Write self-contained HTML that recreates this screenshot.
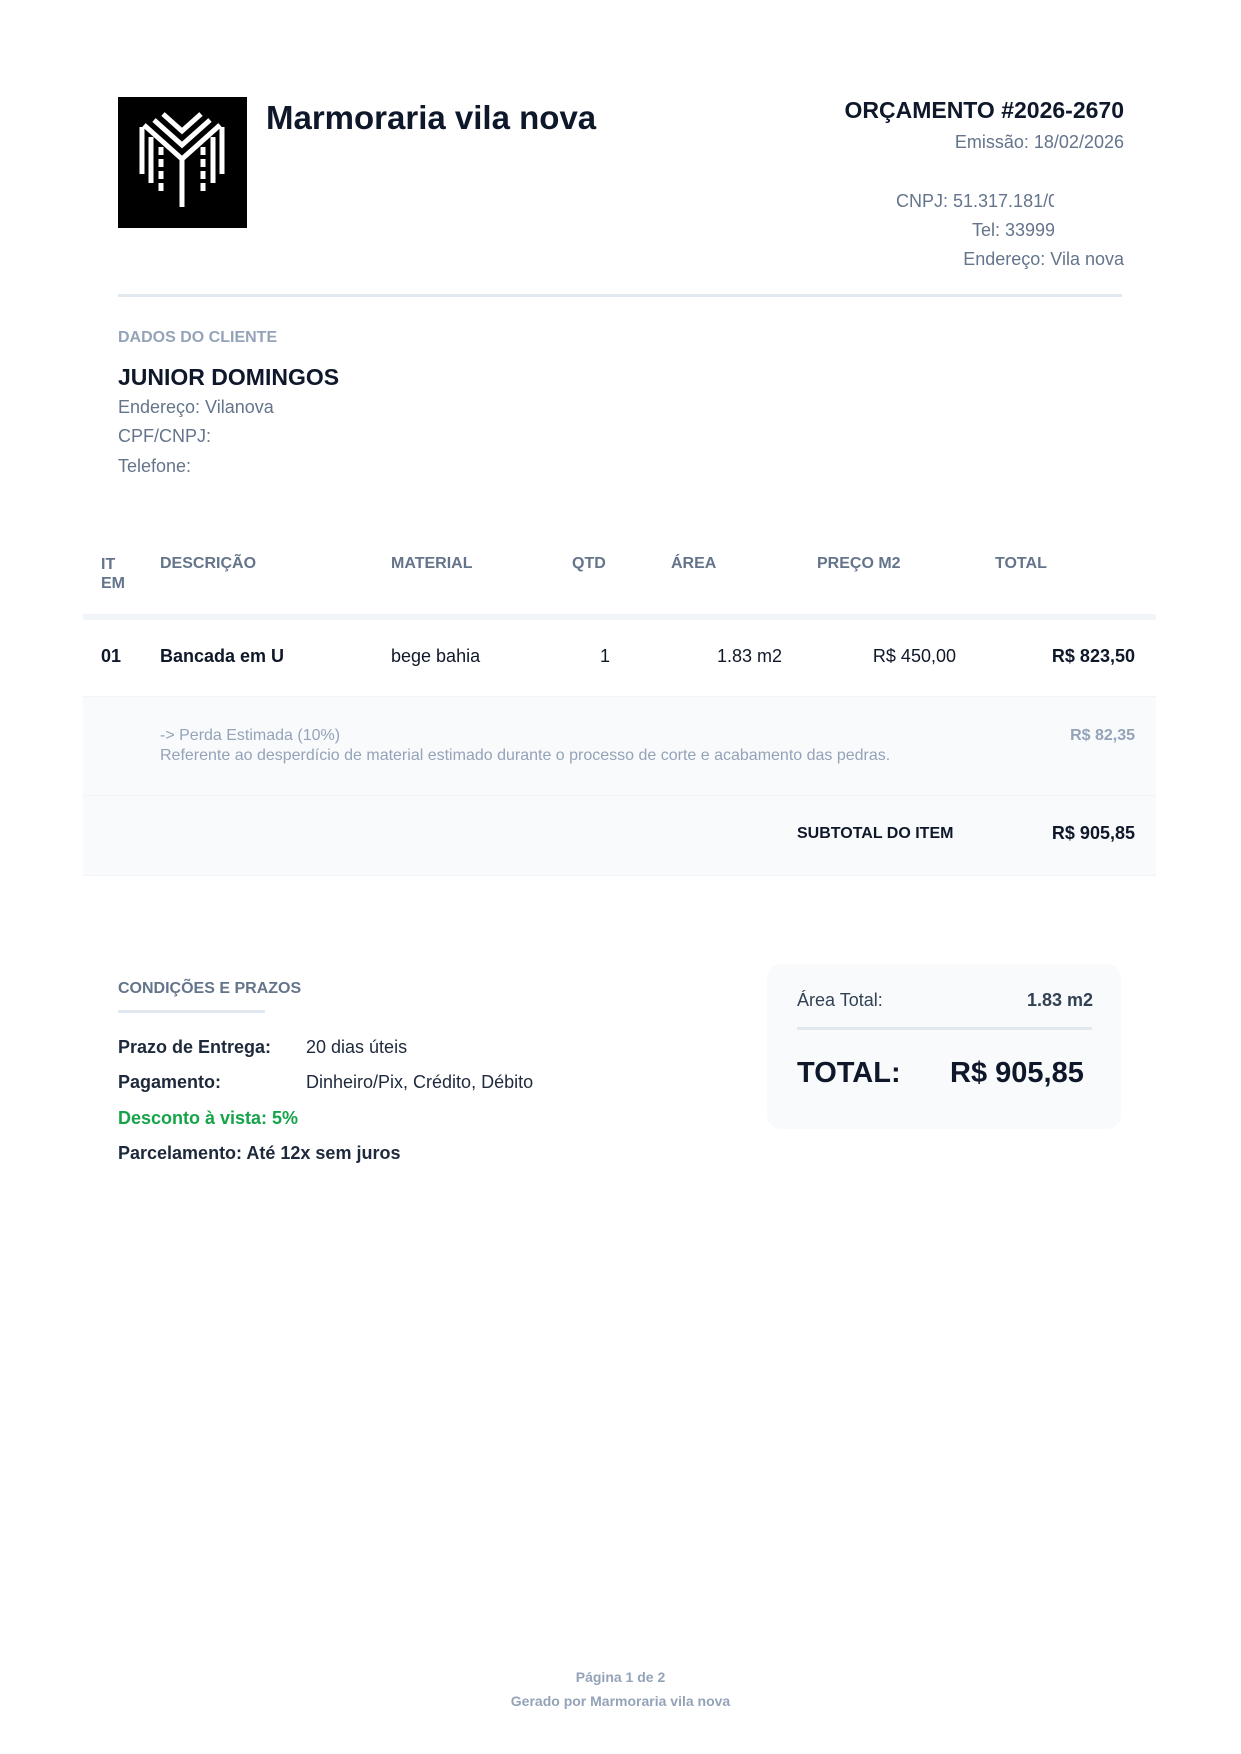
<!DOCTYPE html>
<html><head><meta charset="utf-8"><style>
*{margin:0;padding:0;box-sizing:border-box}
body{width:1241px;height:1754px;background:#fff;font-family:"Liberation Sans",Arial,sans-serif;color:#1e293b;position:relative;overflow:hidden}
.a{position:absolute;white-space:nowrap}
.g{color:#64748b}
.b{font-weight:bold}
.r{text-align:right}
</style></head><body>
<div class="a" style="left:118px;top:97px;width:129px;height:131px;background:#000">
<svg width="129" height="131" viewBox="0 0 129 131">
<g stroke="#fff" stroke-width="5" fill="none" stroke-linecap="butt">
<polyline points="45,17 64,34 83,17"/>
<polyline points="36,23 64,48 92,23"/>
<polyline points="26,28 64,62 102,28"/>
<line x1="64" y1="62" x2="64" y2="110"/>
<line x1="24" y1="30" x2="24" y2="77"/>
<line x1="104" y1="30" x2="104" y2="77"/>
<line x1="33" y1="40" x2="33" y2="86"/>
<line x1="95" y1="40" x2="95" y2="86"/>
<line x1="43" y1="50" x2="43" y2="95" stroke-dasharray="8 4"/>
<line x1="85" y1="50" x2="85" y2="95" stroke-dasharray="8 4"/>
</g></svg></div>
<div class="a b" style="left:266px;top:99px;font-size:33px;color:#0f172a">Marmoraria vila nova</div>
<div class="a b r" style="right:117px;top:97px;font-size:23px;color:#0f172a">ORÇAMENTO #2026-2670</div>
<div class="a g r" style="right:117px;top:132px;font-size:18px">Emissão: 18/02/2026</div>
<div class="a g" style="left:896px;top:191px;width:158px;overflow:hidden;font-size:18px">CNPJ: 51.317.181/0001</div>
<div class="a g" style="left:972px;top:220px;width:82px;overflow:hidden;font-size:18px">Tel: 33999999</div>
<div class="a g r" style="right:117px;top:249px;font-size:18px">Endereço: Vila nova</div>
<div class="a" style="left:118px;top:294px;width:1004px;height:3px;background:#e2e8f0"></div>
<div class="a b" style="left:118px;top:329px;font-size:16px;color:#94a3b8">DADOS DO CLIENTE</div>
<div class="a b" style="left:118px;top:364px;font-size:23px;color:#0f172a">JUNIOR DOMINGOS</div>
<div class="a g" style="left:118px;top:397px;font-size:18px">Endereço: Vilanova</div>
<div class="a g" style="left:118px;top:426px;font-size:18px">CPF/CNPJ:</div>
<div class="a g" style="left:118px;top:456px;font-size:18px">Telefone:</div>

<div class="a b g" style="left:101px;top:555px;font-size:16px;line-height:19px">IT<br>EM</div>
<div class="a b g" style="left:160px;top:555px;font-size:16px">DESCRIÇÃO</div>
<div class="a b g" style="left:391px;top:555px;font-size:16px">MATERIAL</div>
<div class="a b g" style="left:572px;top:555px;font-size:16px">QTD</div>
<div class="a b g" style="left:671px;top:555px;font-size:16px">ÁREA</div>
<div class="a b g" style="left:817px;top:555px;font-size:16px">PREÇO M2</div>
<div class="a b g" style="left:995px;top:555px;font-size:16px">TOTAL</div>
<div class="a" style="left:83px;top:614px;width:1073px;height:6px;background:#f1f5f9"></div>
<div class="a b" style="left:101px;top:646px;font-size:18px;color:#0f172a">01</div>
<div class="a b" style="left:160px;top:646px;font-size:18px;color:#0f172a">Bancada em U</div>
<div class="a" style="left:391px;top:646px;font-size:18px;color:#0f172a">bege bahia</div>
<div class="a" style="left:600px;top:646px;font-size:18px;color:#0f172a">1</div>
<div class="a r" style="right:459px;top:646px;font-size:18px;color:#0f172a">1.83 m2</div>
<div class="a r" style="right:285px;top:646px;font-size:18px;color:#0f172a">R$ 450,00</div>
<div class="a b r" style="right:106px;top:646px;font-size:18px;color:#0f172a">R$ 823,50</div>
<div class="a" style="left:83px;top:696px;width:1073px;height:180px;background:#f8fafc;border-top:1px solid #f1f5f9;border-bottom:1px solid #f1f5f9"></div>
<div class="a" style="left:83px;top:795px;width:1073px;height:1px;background:#f1f5f9"></div>
<div class="a" style="left:160px;top:726px;font-size:16px;color:#94a3b8;line-height:20px">-&gt; Perda Estimada (10%)<br>Referente ao desperdício de material estimado durante o processo de corte e acabamento das pedras.</div>
<div class="a b r" style="right:106px;top:727px;font-size:16px;color:#94a3b8">R$ 82,35</div>
<div class="a b" style="left:797px;top:825px;font-size:16px;color:#0f172a">SUBTOTAL DO ITEM</div>
<div class="a b r" style="right:106px;top:823px;font-size:18px;color:#0f172a">R$ 905,85</div>

<div class="a b g" style="left:118px;top:980px;font-size:16px">CONDIÇÕES E PRAZOS</div>
<div class="a" style="left:118px;top:1010px;width:147px;height:3px;background:#e2e8f0"></div>
<div class="a b" style="left:118px;top:1037px;font-size:18px">Prazo de Entrega:</div>
<div class="a" style="left:306px;top:1037px;font-size:18px">20 dias úteis</div>
<div class="a b" style="left:118px;top:1072px;font-size:18px">Pagamento:</div>
<div class="a" style="left:306px;top:1072px;font-size:18px">Dinheiro/Pix, Crédito, Débito</div>
<div class="a b" style="left:118px;top:1108px;font-size:18px;color:#16a34a">Desconto à vista: 5%</div>
<div class="a b" style="left:118px;top:1143px;font-size:18px">Parcelamento: Até 12x sem juros</div>

<div class="a" style="left:767px;top:964px;width:354px;height:165px;background:#f8fafc;border-radius:14px"></div>
<div class="a" style="left:797px;top:990px;font-size:18px;color:#334155">Área Total:</div>
<div class="a b r" style="right:148px;top:990px;font-size:18px;color:#334155">1.83 m2</div>
<div class="a" style="left:797px;top:1027px;width:295px;height:3px;background:#e2e8f0"></div>
<div class="a b" style="left:797px;top:1057px;font-size:29px;color:#0f172a">TOTAL:</div>
<div class="a b" style="left:950px;top:1057px;font-size:29px;color:#0f172a">R$ 905,85</div>

<div class="a b" style="left:0;width:1241px;text-align:center;top:1669px;font-size:14px;color:#94a3b8">Página 1 de 2</div>
<div class="a b" style="left:0;width:1241px;text-align:center;top:1693px;font-size:14px;color:#94a3b8">Gerado por Marmoraria vila nova</div>
</body></html>
